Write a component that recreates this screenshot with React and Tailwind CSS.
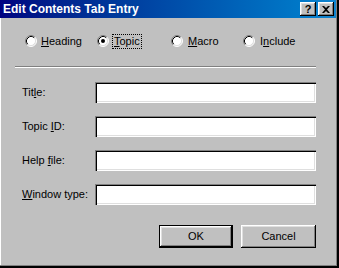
import React from 'react'

function Radio({ checked }) {
  return (
    <svg width="12" height="12" viewBox="0 0 12 12" className="shrink-0">
      <circle cx="6" cy="6" r="5" fill="#fff" />
      <path d="M2.11 9.89A5.5 5.5 0 0 1 9.89 2.11" fill="none" stroke="#808080" />
      <path d="M9.89 2.11A5.5 5.5 0 0 1 2.11 9.89" fill="none" stroke="#fff" />
      <path d="M2.82 9.18A4.5 4.5 0 0 1 9.18 2.82" fill="none" stroke="#000" />
      <path d="M9.18 2.82A4.5 4.5 0 0 1 2.82 9.18" fill="none" stroke="#dfdfdf" />
      {checked && <circle cx="6" cy="6" r="2" fill="#000" />}
    </svg>
  )
}

const raised =
  'bg-[#c0c0c0] shadow-[inset_-1px_-1px_0_#000,inset_1px_1px_0_#fff,inset_-2px_-2px_0_#808080,inset_2px_2px_0_#dfdfdf]'

function Field({ label }) {
  return (
    <div className="flex h-[21px] items-center">
      <span className="ml-[7px] w-[73px] shrink-0">{label}</span>
      <div className="h-[21px] flex-1 bg-white shadow-[inset_1px_1px_0_#808080,inset_2px_2px_0_#000,inset_-1px_-1px_0_#fff,inset_-2px_-2px_0_#dfdfdf]" />
    </div>
  )
}

export default function App() {
  return (
    <div className="flex h-[268px] w-[339px] flex-col border-b-2 border-r-2 border-black bg-[#c0c0c0] font-['Liberation_Sans',Arial,sans-serif] text-[11px] leading-[13px] text-black">
      <div className="flex h-full flex-col border-b border-r border-[#808080]">
        {/* title bar */}
        <div className="flex h-[18px] shrink-0 items-center bg-gradient-to-r from-[#000080] to-[#1084d0] pl-[3px] pr-[2px]">
          <span className="flex-1 text-[12px] font-bold text-white">Edit Contents Tab Entry</span>
          <div className={`flex h-[14px] w-[16px] items-center justify-center text-[11px] font-bold leading-none ${raised}`}>?</div>
          <div className={`ml-[2px] flex h-[14px] w-[16px] items-center justify-center ${raised}`}>
            <svg width="8" height="7" viewBox="0 0 8 7">
              <path d="M0 0h2l2 2 2-2h2L5 3.5 8 7H6L4 5 2 7H0l3-3.5z" fill="#000" />
            </svg>
          </div>
        </div>

        <div className="flex flex-1 flex-col border-l border-white pl-[14px] pr-[20px]">
          {/* radio row */}
          <div className="mt-[16px] flex h-[14px] items-center pl-[10px]">
            <div className="flex w-[72px] items-center">
              <Radio />
              <span className="ml-[4px]"><u>H</u>eading</span>
            </div>
            <div className="flex w-[74px] items-center">
              <Radio checked />
              <span className="ml-[3px] border border-dotted border-black px-[1px]"><u>T</u>opic</span>
            </div>
            <div className="flex w-[72px] items-center">
              <Radio />
              <span className="ml-[5px]"><u>M</u>acro</span>
            </div>
            <div className="flex items-center">
              <Radio />
              <span className="ml-[5px]">I<u>n</u>clude</span>
            </div>
          </div>

          <div className="mt-[18px] h-[2px] border-b border-t border-b-white border-t-[#808080]" />

          <div className="mt-[14px] flex flex-col gap-[13px]">
            <Field label={<>Tit<u>l</u>e:</>} />
            <Field label={<>Topic <u>I</u>D:</>} />
            <Field label={<>Help <u>f</u>ile:</>} />
            <Field label={<><u>W</u>indow type:</>} />
          </div>

          <div className="mt-[20px] flex justify-end gap-[8px]">
            <button className="h-[23px] w-[74px] border border-black p-0">
              <div className={`flex h-full w-full items-center justify-center ${raised}`}>OK</div>
            </button>
            <button className={`h-[23px] w-[75px] ${raised}`}>Cancel</button>
          </div>
        </div>
      </div>
    </div>
  )
}
